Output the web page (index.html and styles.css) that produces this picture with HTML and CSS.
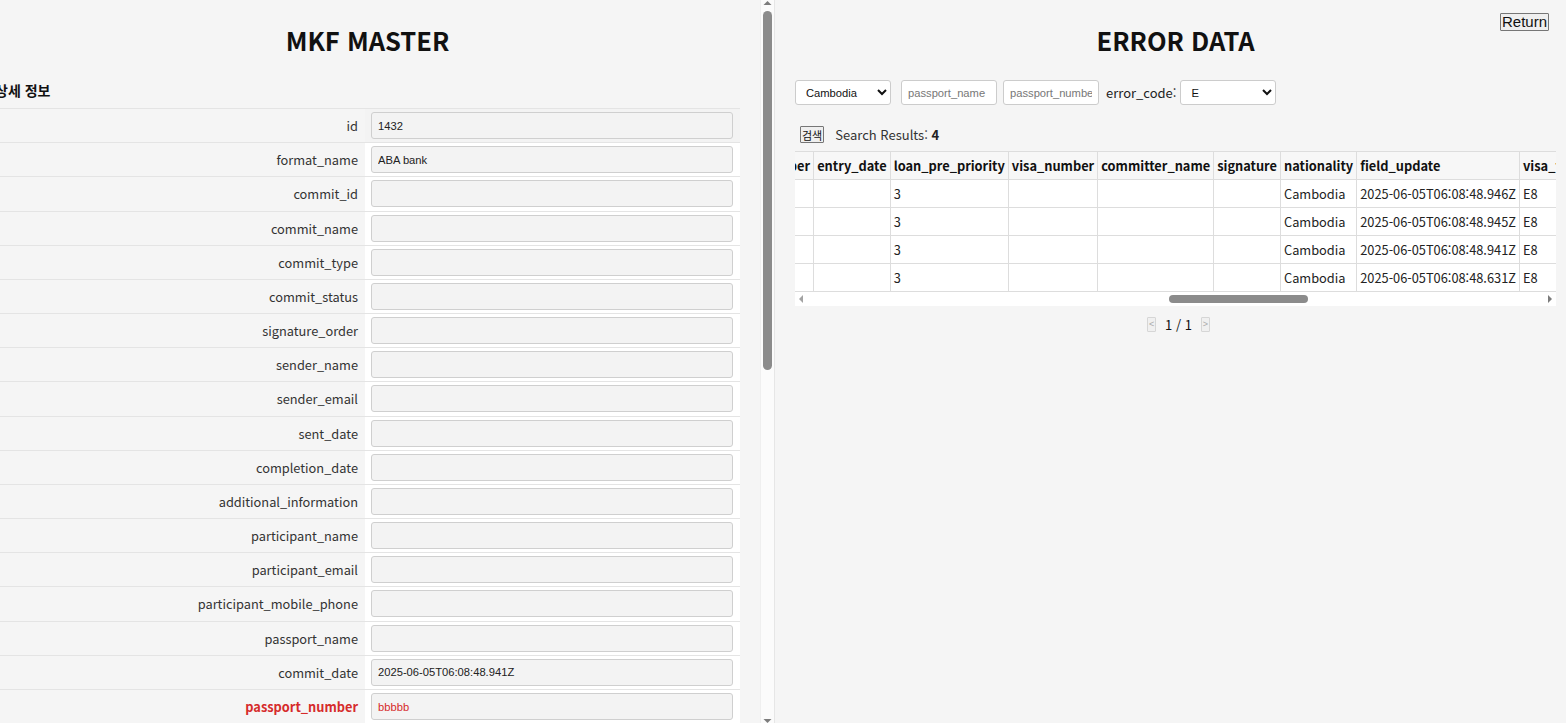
FILE: index.html
```html
<!DOCTYPE html>
<html lang="ko">
<head>
<meta charset="utf-8">
<title>MKF MASTER / ERROR DATA</title>
<link rel="stylesheet" href="styles.css">
</head>
<body>
<div class="page">
  <section class="master">
    <div class="master-view" id="masterView">
      <div class="master-inner">
        <h1 class="title">MKF MASTER</h1>
        <h2 class="subtitle">상세 정보</h2>
        <div class="detail">
          <div class="row first"><div class="lbl">id</div><div class="val"><input class="field" value="1432" readonly></div></div>
          <div class="row"><div class="lbl">format_name</div><div class="val"><input class="field" value="ABA bank" readonly></div></div>
          <div class="row"><div class="lbl">commit_id</div><div class="val"><input class="field" readonly></div></div>
          <div class="row"><div class="lbl">commit_name</div><div class="val"><input class="field" readonly></div></div>
          <div class="row"><div class="lbl">commit_type</div><div class="val"><input class="field" readonly></div></div>
          <div class="row"><div class="lbl">commit_status</div><div class="val"><input class="field" readonly></div></div>
          <div class="row"><div class="lbl">signature_order</div><div class="val"><input class="field" readonly></div></div>
          <div class="row"><div class="lbl">sender_name</div><div class="val"><input class="field" readonly></div></div>
          <div class="row"><div class="lbl">sender_email</div><div class="val"><input class="field" readonly></div></div>
          <div class="row"><div class="lbl">sent_date</div><div class="val"><input class="field" readonly></div></div>
          <div class="row"><div class="lbl">completion_date</div><div class="val"><input class="field" readonly></div></div>
          <div class="row"><div class="lbl">additional_information</div><div class="val"><input class="field" readonly></div></div>
          <div class="row"><div class="lbl">participant_name</div><div class="val"><input class="field" readonly></div></div>
          <div class="row"><div class="lbl">participant_email</div><div class="val"><input class="field" readonly></div></div>
          <div class="row"><div class="lbl">participant_mobile_phone</div><div class="val"><input class="field" readonly></div></div>
          <div class="row"><div class="lbl">passport_name</div><div class="val"><input class="field" readonly></div></div>
          <div class="row"><div class="lbl">commit_date</div><div class="val"><input class="field" value="2025-06-05T06:08:48.941Z" readonly></div></div>
          <div class="row error"><div class="lbl">passport_number</div><div class="val"><input class="field" value="bbbbb" readonly></div></div>
          <div class="row"><div class="lbl">entry_date</div><div class="val"><input class="field" readonly></div></div>
          <div class="row"><div class="lbl">loan_pre_priority</div><div class="val"><input class="field" value="3" readonly></div></div>
          <div class="row"><div class="lbl">visa_number</div><div class="val"><input class="field" readonly></div></div>
          <div class="row"><div class="lbl">committer_name</div><div class="val"><input class="field" readonly></div></div>
          <div class="row"><div class="lbl">signature</div><div class="val"><input class="field" readonly></div></div>
          <div class="row"><div class="lbl">nationality</div><div class="val"><input class="field" value="Cambodia" readonly></div></div>
          <div class="row"><div class="lbl">field_update</div><div class="val"><input class="field" value="2025-06-05T06:08:48.941Z" readonly></div></div>
          <div class="row"><div class="lbl">visa_type</div><div class="val"><input class="field" value="E8" readonly></div></div>
          <div class="row"><div class="lbl">error_code</div><div class="val"><input class="field" value="E" readonly></div></div>
          <div class="row"><div class="lbl">error_message</div><div class="val"><input class="field" readonly></div></div>
          <div class="row"><div class="lbl">phone_number</div><div class="val"><input class="field" readonly></div></div>
          <div class="row"><div class="lbl">birth_date</div><div class="val"><input class="field" readonly></div></div>
          <div class="row"><div class="lbl">gender</div><div class="val"><input class="field" readonly></div></div>
          <div class="row"><div class="lbl">address</div><div class="val"><input class="field" readonly></div></div>
          <div class="row"><div class="lbl">bank_name</div><div class="val"><input class="field" readonly></div></div>
          <div class="row"><div class="lbl">account_number</div><div class="val"><input class="field" readonly></div></div>
          <div class="row"><div class="lbl">employer_name</div><div class="val"><input class="field" readonly></div></div>
          <div class="row"><div class="lbl">created_at</div><div class="val"><input class="field" readonly></div></div>
          <div class="row"><div class="lbl">updated_at</div><div class="val"><input class="field" readonly></div></div>
          <div class="row"><div class="lbl">memo</div><div class="val"><input class="field" readonly></div></div>
        </div>
      </div>
    </div>
    <div class="vbar">
      <span class="bar-btn vbtn"><svg width="15" height="12" viewBox="0 0 15 12"><path d="M3.5 5h8L7.5 1z" fill="#7c7c7c"/></svg></span>
      <div class="vbar-track" id="vTrack"><div class="vbar-thumb" id="vThumb"></div></div>
      <span class="bar-btn vbtn"><svg width="15" height="12" viewBox="0 0 15 12"><path d="M3.5 7h8L7.5 11z" fill="#7c7c7c"/></svg></span>
    </div>
  </section>

  <section class="errors">
    <header class="errors-head">
      <h1 class="title">ERROR DATA</h1>
      <button class="return-btn" type="button">Return</button>
    </header>

    <div class="filters">
      <select class="ctl sel-country"><option>Cambodia</option></select>
      <input class="ctl inp inp-name" placeholder="passport_name">
      <input class="ctl inp inp-number" placeholder="passport_number">
      <label class="code-label">error_code:</label>
      <select class="ctl sel-code"><option>E</option></select>
    </div>

    <div class="search-row">
      <button class="search-btn" type="button">검색</button>
      <span class="results">Search Results: <b>4</b></span>
    </div>

    <div class="grid-box">
      <div class="grid-wrap" id="gridWrap">
        <table class="grid">
          <thead>
            <tr>
              <th>id</th><th>format_name</th><th>sheet_no</th><th>commit_id</th><th>commit_name</th><th>commit_type</th><th>commit_status</th><th>signature_order</th><th>sender_name</th><th>sender_email</th><th>sent_date</th><th>completion_date</th><th>additional_information</th><th>participant_name</th><th>participant_email</th><th>participant_mobile_phone</th><th>passport_name</th><th>commit_date</th><th>passport_number</th><th id="entryCol">entry_date</th><th>loan_pre_priority</th><th>visa_number</th><th>committer_name</th><th>signature</th><th>nationality</th><th>field_update</th><th>visa_type</th><th>error_code</th><th>error_message</th><th>phone_number</th><th>birth_date</th><th>gender</th><th>address</th><th>bank_name</th><th>account_number</th><th>employer_name</th><th>remark</th><th>status</th><th>reg_user</th><th>created_at</th><th>updated_at</th>
            </tr>
          </thead>
          <tbody>
            <tr>
              <td>1435</td><td>ABA bank</td><td></td><td></td><td></td><td></td><td></td><td></td><td></td><td></td><td></td><td></td><td></td><td></td><td></td><td></td><td></td><td>2025-06-05T06:08:48.946Z</td><td>aaaaa</td><td></td><td>3</td><td></td><td></td><td></td><td>Cambodia</td><td>2025-06-05T06:08:48.946Z</td><td>E8</td><td>E</td><td></td><td></td><td></td><td></td><td></td><td></td><td></td><td></td><td></td><td></td><td></td><td>2025-06-05T06:08:48.946Z</td><td>2025-06-05T06:08:48.946Z</td>
            </tr>
            <tr>
              <td>1434</td><td>ABA bank</td><td></td><td></td><td></td><td></td><td></td><td></td><td></td><td></td><td></td><td></td><td></td><td></td><td></td><td></td><td></td><td>2025-06-05T06:08:48.945Z</td><td>ccccc</td><td></td><td>3</td><td></td><td></td><td></td><td>Cambodia</td><td>2025-06-05T06:08:48.945Z</td><td>E8</td><td>E</td><td></td><td></td><td></td><td></td><td></td><td></td><td></td><td></td><td></td><td></td><td></td><td>2025-06-05T06:08:48.945Z</td><td>2025-06-05T06:08:48.945Z</td>
            </tr>
            <tr>
              <td>1432</td><td>ABA bank</td><td></td><td></td><td></td><td></td><td></td><td></td><td></td><td></td><td></td><td></td><td></td><td></td><td></td><td></td><td></td><td>2025-06-05T06:08:48.941Z</td><td>bbbbb</td><td></td><td>3</td><td></td><td></td><td></td><td>Cambodia</td><td>2025-06-05T06:08:48.941Z</td><td>E8</td><td>E</td><td></td><td></td><td></td><td></td><td></td><td></td><td></td><td></td><td></td><td></td><td></td><td>2025-06-05T06:08:48.941Z</td><td>2025-06-05T06:08:48.941Z</td>
            </tr>
            <tr>
              <td>1431</td><td>ABA bank</td><td></td><td></td><td></td><td></td><td></td><td></td><td></td><td></td><td></td><td></td><td></td><td></td><td></td><td></td><td></td><td>2025-06-05T06:08:48.631Z</td><td>ddddd</td><td></td><td>3</td><td></td><td></td><td></td><td>Cambodia</td><td>2025-06-05T06:08:48.631Z</td><td>E8</td><td>E</td><td></td><td></td><td></td><td></td><td></td><td></td><td></td><td></td><td></td><td></td><td></td><td>2025-06-05T06:08:48.631Z</td><td>2025-06-05T06:08:48.631Z</td>
            </tr>
          </tbody>
        </table>
      </div>
      <div class="hbar">
        <span class="bar-btn hbtn"><svg width="12" height="14" viewBox="0 0 12 14"><path d="M8 3v8L4 7z" fill="#a3a3a3"/></svg></span>
        <div class="hbar-track" id="hTrack"><div class="hbar-thumb" id="hThumb"></div></div>
        <span class="bar-btn hbtn"><svg width="12" height="14" viewBox="0 0 12 14"><path d="M4 3v8L8 7z" fill="#7c7c7c"/></svg></span>
      </div>
    </div>

    <div class="pager">
      <button class="pg-btn" type="button">&lt;</button>
      <span class="pg-text">1 / 1</span>
      <button class="pg-btn" type="button">&gt;</button>
    </div>
  </section>
</div>
<script src="script.js"></script>
</body>
</html>
```

FILE: styles.css
```css
* { box-sizing: border-box; }

html, body {
  margin: 0;
  padding: 0;
  height: 100%;
  background: #f5f5f5;
  font-family: "Noto Sans CJK KR", "Noto Sans", sans-serif;
  color: #222;
}

.page {
  display: flex;
  height: 723px;
  overflow: hidden;
}

/* ---------- left: master ---------- */
.master {
  flex: 0 0 775px;
  display: flex;
  height: 100%;
}

.master-view {
  flex: 0 0 760px;
  height: 100%;
  overflow: hidden;
}

.master-inner {
  width: 760px;
  margin-left: -13px;
  padding: 20px 7px 5px 8px;
}

.vbar {
  flex: 0 0 15px;
  display: flex;
  flex-direction: column;
  background: #fbfbfb;
  border-left: 1px solid #efefef;
  border-right: 1px solid #e6e6e6;
}

.bar-btn {
  display: flex;
  flex: 0 0 auto;
}

.vbtn { height: 11px; justify-content: center; margin: 0 -1px; }
.vbtn svg { display: block; }

.vbar-track {
  flex: 1 1 auto;
  padding: 0 2px;
}

.vbar-thumb {
  height: 358px;
  background: #8b8b8b;
  border-radius: 5px;
}

.title {
  margin: 0;
  font-size: 25.5px;
  line-height: 39px;
  font-weight: 700;
  text-align: center;
  color: #111;
}

.subtitle {
  margin: 21px 0 8px 0;
  font-size: 14px;
  line-height: 20px;
  font-weight: 700;
  color: #111;
}

.detail {
  border-top: 1px solid #e4e4e4;
}

.row {
  display: grid;
  grid-template-columns: 370px 1fr;
  height: 34.18px;
  border-bottom: 1px solid #e4e4e4;
}

.lbl {
  display: flex;
  align-items: center;
  justify-content: flex-end;
  padding-right: 7px;
  font-size: 12.8px;
  color: #333;
}

.val {
  display: flex;
  align-items: center;
  padding: 0 7px 0 6px;
  background: #fff;
}

.row.first .val { background: #f3f3f3; }

.field {
  width: 100%;
  height: 27px;
  border: 1px solid #cfcfcf;
  border-radius: 3px;
  background: #f3f3f3;
  padding: 0 6px;
  font-family: "Liberation Sans", Arial, sans-serif;
  font-size: 11.2px;
  color: #222;
  outline: none;
}

.row.error .lbl { color: #d62b2b; font-weight: 700; }
.row.error .field { color: #d62b2b; }

/* ---------- right: errors ---------- */
.errors {
  flex: 1 1 auto;
  min-width: 0;
  padding: 0 10px 0 20px;
}

.errors-head {
  display: grid;
  grid-template-columns: 1fr auto 1fr;
  align-items: start;
  padding-top: 20px;
}

.errors-head .title { grid-column: 2; }

.return-btn {
  grid-column: 3;
  justify-self: end;
  margin: -7px 7px 0 0;
  padding: 0 1px;
  height: 18px;
  font-family: "Liberation Sans", Arial, sans-serif;
  font-size: 15px;
  line-height: 16px;
  color: #111;
  background: #efefef;
  border: 1px solid #767676;
  border-radius: 1px;
}

.filters {
  display: flex;
  align-items: center;
  margin-top: 21px;
  height: 25px;
}

.ctl {
  height: 25px;
  width: 96px;
  border: 1px solid #cccccc;
  border-radius: 3px;
  background: #fff;
  font-family: "Liberation Sans", Arial, sans-serif;
  font-size: 11.2px;
  color: #111;
}

.sel-country { padding-left: 6px; }
.inp { padding: 0 6px; }
.inp::placeholder { color: #777; }
.inp-name { margin-left: 10px; }
.inp-number { margin-left: 6px; }

.code-label {
  margin-left: 7px;
  font-size: 13px;
  color: #222;
}

.sel-code { margin-left: 4px; padding-left: 6px; }

.search-row {
  display: flex;
  align-items: center;
  margin-top: 21px;
  height: 17px;
  padding-left: 5px;
}

.search-btn {
  height: 17px;
  padding: 0 1px;
  font-family: "Noto Sans CJK KR", sans-serif;
  font-size: 11px;
  line-height: 14px;
  color: #111;
  background: #efefef;
  border: 1px solid #767676;
  border-radius: 1px;
}

.results {
  margin-left: 11px;
  font-size: 13px;
  color: #333;
}

.results b { color: #222; }

.grid-box {
  margin-top: 8px;
  width: 761px;
  background: #fff;
}

.grid-wrap {
  width: 100%;
  overflow: hidden;
}

.grid {
  border-collapse: collapse;
  white-space: nowrap;
  font-size: 12.8px;
}

.grid th,
.grid td {
  height: 28px;
  padding: 0 3px;
  border: 1px solid #dddddd;
  text-align: left;
  color: #222;
}

.grid th {
  background: #f7f7f7;
  font-weight: 700;
  color: #111;
}

.hbar {
  display: flex;
  height: 14px;
  background: #fff;
}

.hbtn { width: 12px; align-items: center; }
.hbtn svg { display: block; }

.hbar-track {
  flex: 1 1 auto;
  display: flex;
  align-items: center;
}

.hbar-thumb {
  width: 142px;
  height: 8px;
  margin-left: 365px;
  background: #8b8b8b;
  border-radius: 4px;
}

.pager {
  display: flex;
  justify-content: center;
  align-items: center;
  margin-top: 10px;
  height: 16px;
  padding-left: 6px;
}

.pg-btn {
  width: 9px;
  height: 15px;
  padding: 0;
  font-size: 9px;
  line-height: 12px;
  color: #aaa;
  background: #f0f0f0;
  border: 1px solid #d6d6d6;
  border-radius: 1px;
}

.pg-text {
  margin: 0 9px;
  font-size: 13px;
  color: #111;
}
```

FILE: script.js
```js
(function () {
  var wrap = document.getElementById('gridWrap');
  var col = document.getElementById('entryCol');
  var hTrack = document.getElementById('hTrack');
  var hThumb = document.getElementById('hThumb');
  if (wrap && col) {
    wrap.scrollLeft = col.offsetLeft - 18;
    if (hTrack && hThumb && wrap.scrollWidth > 0) {
      var t = hTrack.clientWidth;
      hThumb.style.width = Math.round(t * wrap.clientWidth / wrap.scrollWidth) + 'px';
      hThumb.style.marginLeft = Math.round(t * wrap.scrollLeft / wrap.scrollWidth) + 'px';
    }
  }

  var view = document.getElementById('masterView');
  var vTrack = document.getElementById('vTrack');
  var vThumb = document.getElementById('vThumb');
  if (view && vTrack && vThumb && view.scrollHeight > 0) {
    vThumb.style.height = Math.round(vTrack.clientHeight * view.clientHeight / view.scrollHeight) + 'px';
  }
})();
```
